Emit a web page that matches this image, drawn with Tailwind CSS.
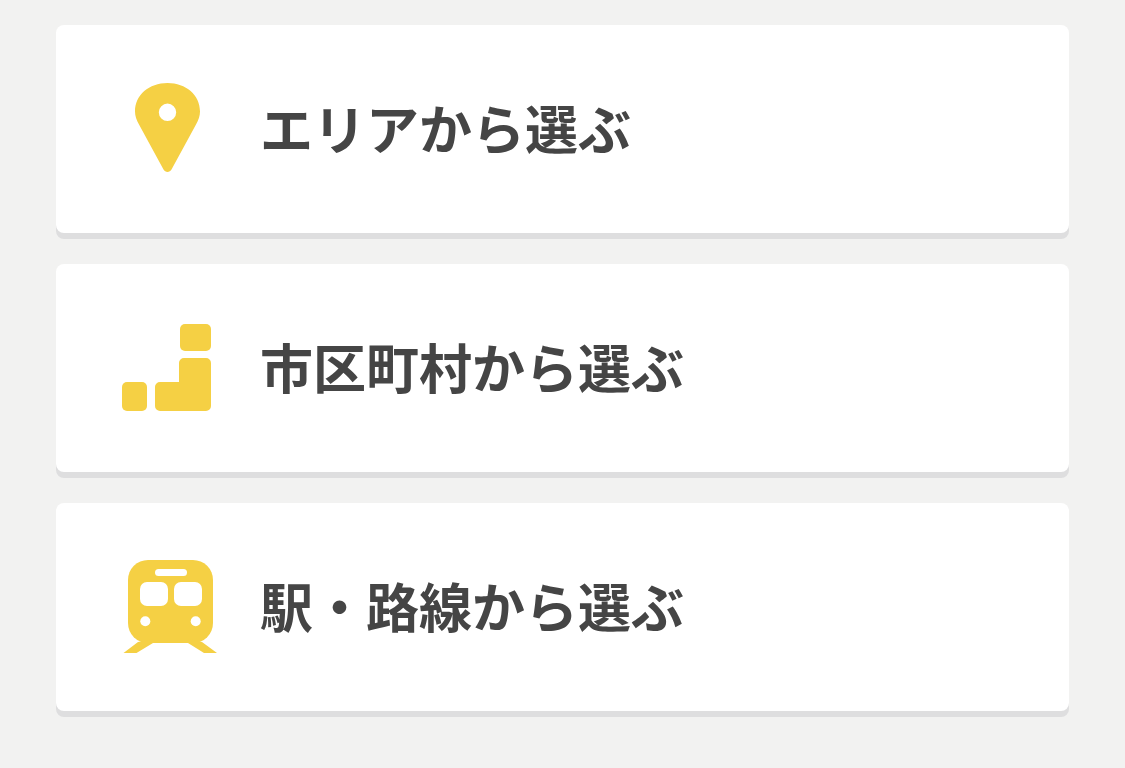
<!DOCTYPE html>
<html lang="ja">
<head>
    <meta charset="UTF-8">
    <meta name="viewport" content="width=device-width, initial-scale=1.0">
    <title>エリアから選ぶ</title>
    <script src="https://cdn.jsdelivr.net/npm/@tailwindcss/browser@4"></script>
</head>
<body class="bg-[#f2f2f1] min-h-screen font-['Noto_Sans_CJK_JP',sans-serif]">
    <nav class="flex flex-col gap-[31px] px-14 pt-[25px] pb-12">
        <!-- Area -->
        <a href="#area" class="flex items-center gap-[42px] h-52 px-[66px] rounded-lg bg-white shadow-[0_6px_0_#dededf]">
            <svg class="size-24 shrink-0" viewBox="0 0 96 96" fill="#f5d044" aria-hidden="true">
                <path fill-rule="evenodd" d="M45.500 2C27 2 13 14 13 30.500C13 35 14.500 39 17 43.500L41.500 88.500C43.200 91.800 47.800 91.800 49.500 88.500L74 43.500C76.500 39 78 35 78 30.500C78 14 64 2 45.500 2ZM45.500 22.600a8.700 8.700 0 1 1 0 17.400a8.700 8.700 0 1 1 0-17.400Z"/>
            </svg>
            <span class="pb-1 text-[53px] leading-[80px] font-bold text-[#454545]">エリアから選ぶ</span>
        </a>
        <!-- City -->
        <a href="#city" class="flex items-center gap-[42px] h-52 px-[66px] rounded-lg bg-white shadow-[0_6px_0_#dededf]">
            <svg class="size-24 shrink-0" viewBox="0 0 96 96" fill="#f5d044" aria-hidden="true">
                <rect x="58" y="4" width="31" height="27" rx="5"/>
                <rect x="0" y="62" width="25" height="29" rx="5"/>
                <path d="M62 38h22a5 5 0 0 1 5 5v43a5 5 0 0 1-5 5H38a5 5 0 0 1-5-5V67a5 5 0 0 1 5-5h19V43a5 5 0 0 1 5-5Z"/>
            </svg>
            <span class="pb-1 text-[53px] leading-[80px] font-bold text-[#454545]">市区町村から選ぶ</span>
        </a>
        <!-- Station -->
        <a href="#station" class="flex items-center gap-[42px] h-52 px-[66px] rounded-lg bg-white shadow-[0_6px_0_#dededf]">
            <svg class="size-24 shrink-0" viewBox="0 0 96 96" fill="#f5d044" aria-hidden="true">
                <rect x="6" y="1" width="85" height="83" rx="20"/>
                <path d="M16 83L1.500 94h13L31 84V80ZM80 83l15 11H82L66 84V80Z"/>
                <g fill="#fff">
                    <rect x="33" y="10" width="32" height="7" rx="3.500"/>
                    <rect x="18" y="23" width="28" height="24" rx="7"/>
                    <rect x="52" y="23" width="28" height="24" rx="7"/>
                    <circle cx="23.300" cy="62.300" r="5"/>
                    <circle cx="73.700" cy="62.300" r="5"/>
                </g>
            </svg>
            <span class="pb-1 text-[53px] leading-[80px] font-bold text-[#454545]">駅・路線から選ぶ</span>
        </a>
    </nav>
</body>
</html>
